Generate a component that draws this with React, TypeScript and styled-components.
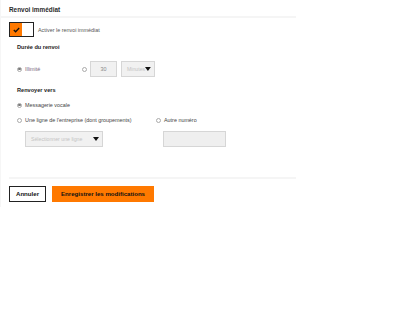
import React from "react";
import styled, { createGlobalStyle } from "styled-components";

const GlobalStyle = createGlobalStyle`
  body {
    margin: 0;
    background: #ffffff;
    font-family: "Liberation Sans", Arial, sans-serif;
    color: #333;
  }
`;

const Caret: React.FC = () => (
  <svg width="6" height="4" viewBox="0 0 6 4">
    <polygon points="0,0 6,0 3,4" fill="#111" />
  </svg>
);

const App: React.FC = () => {
  return (
    <>
      <GlobalStyle />
      <Panel>
        <Header>Renvoi immédiat</Header>
        <Rule />
        <Body>
          <ToggleRow>
            <Toggle>
              <ToggleOn>
                <svg width="7" height="6" viewBox="0 0 7 6">
                  <polyline points="0.8,3 2.6,4.8 6.2,1" fill="none" stroke="#111" strokeWidth="1.3" />
                </svg>
              </ToggleOn>
            </Toggle>
            <Label>Activer le renvoi immédiat</Label>
          </ToggleRow>

          <Section>
            <SectionTitle $top={6}>Durée du renvoi</SectionTitle>
            <FieldRow $top={10}>
              <Option $width={65}>
                <Radio $checked />
                <OptionText $muted>Illimité</OptionText>
              </Option>
              <Radio />
              <NumberBox $ml={3}>30</NumberBox>
              <SelectBox $width={34} $ml={4}>
                <Placeholder>Minutes</Placeholder>
                <Caret />
              </SelectBox>
            </FieldRow>

            <SectionTitle $top={9}>Renvoyer vers</SectionTitle>
            <Option $top={7}>
              <Radio $checked />
              <OptionText>Messagerie vocale</OptionText>
            </Option>
            <Columns>
              <Column $width={139}>
                <Option>
                  <Radio />
                  <OptionText>Une ligne de l'entreprise (dont groupements)</OptionText>
                </Option>
                <SelectBox $width={78} $ml={8} $top={7}>
                  <Placeholder>Sélectionner une ligne</Placeholder>
                  <Caret />
                </SelectBox>
              </Column>
              <Column>
                <Option>
                  <Radio />
                  <OptionText>Autre numéro</OptionText>
                </Option>
                <TextBox />
              </Column>
            </Columns>
          </Section>

          <Rule $top={30} />
          <Footer>
            <Button>Annuler</Button>
            <Button $primary>Enregistrer les modifications</Button>
          </Footer>
        </Body>
      </Panel>
    </>
  );
};

const Panel = styled.div`
  width: 295px;
  padding-bottom: 5px;
  border-left: 1px solid #f6f6f6;
`;

const Header = styled.div`
  padding: 6px 0 2px 8px;
  font-size: 6.4px;
  font-weight: bold;
  line-height: 8px;
  color: #2a2a2a;
`;

const Rule = styled.div<{ $top?: number }>`
  height: 2px;
  margin-top: ${(p) => p.$top ?? 0}px;
  background: #f5f5f5;
`;

const Body = styled.div`
  padding-left: 8px;
`;

const ToggleRow = styled.div`
  display: flex;
  align-items: center;
  gap: 4px;
  margin-top: 4px;
  height: 15px;
`;

const Toggle = styled.div`
  display: flex;
  width: 25px;
  height: 15px;
  box-sizing: border-box;
  border: 1px solid #222;
  background: #fff;
`;

const ToggleOn = styled.div`
  display: flex;
  align-items: center;
  justify-content: center;
  width: 12px;
  height: 100%;
  background: #ff7900;
`;

const Label = styled.span`
  font-size: 5.4px;
  color: #555;
`;

const Section = styled.div`
  padding-left: 8px;
`;

const SectionTitle = styled.div<{ $top: number }>`
  margin-top: ${(p) => p.$top}px;
  font-size: 5.6px;
  font-weight: bold;
  line-height: 8px;
  color: #222;
`;

const FieldRow = styled.div<{ $top: number }>`
  display: flex;
  align-items: center;
  margin-top: ${(p) => p.$top}px;
  height: 16px;
`;

const Option = styled.div<{ $width?: number; $top?: number }>`
  display: flex;
  align-items: center;
  gap: 3px;
  height: 8px;
  width: ${(p) => (p.$width ? `${p.$width}px` : "auto")};
  margin-top: ${(p) => p.$top ?? 0}px;
`;

const Radio = styled.span<{ $checked?: boolean }>`
  display: inline-flex;
  align-items: center;
  justify-content: center;
  width: 5px;
  height: 5px;
  box-sizing: border-box;
  border: 0.7px solid #aaa;
  border-radius: 50%;
  background: #fff;
  flex-shrink: 0;

  &::after {
    content: "";
    display: ${(p) => (p.$checked ? "block" : "none")};
    width: 2.4px;
    height: 2.4px;
    border-radius: 50%;
    background: #777;
  }
`;

const OptionText = styled.span<{ $muted?: boolean }>`
  font-size: 5.4px;
  color: ${(p) => (p.$muted ? "#7a6a80" : "#444")};
  white-space: nowrap;
`;

const NumberBox = styled.div<{ $ml: number }>`
  display: flex;
  align-items: center;
  justify-content: center;
  margin-left: ${(p) => p.$ml}px;
  width: 27px;
  height: 16px;
  box-sizing: border-box;
  border: 1px solid #d6d6d6;
  background: #f1f1f1;
  font-size: 5.4px;
  color: #888;
`;

const SelectBox = styled.div<{ $width: number; $ml: number; $top?: number }>`
  display: flex;
  align-items: center;
  justify-content: space-between;
  margin-left: ${(p) => p.$ml}px;
  margin-top: ${(p) => p.$top ?? 0}px;
  width: ${(p) => p.$width}px;
  height: 16px;
  padding: 0 3px 0 5px;
  box-sizing: border-box;
  border: 1px solid #d6d6d6;
  background: #f1f1f1;
`;

const Placeholder = styled.span`
  font-size: 5.2px;
  color: #c4c4c4;
  white-space: nowrap;
`;

const Columns = styled.div`
  display: flex;
  margin-top: 7px;
`;

const Column = styled.div<{ $width?: number }>`
  display: flex;
  flex-direction: column;
  width: ${(p) => (p.$width ? `${p.$width}px` : "auto")};
`;

const TextBox = styled.div`
  margin: 7px 0 0 7px;
  width: 63px;
  height: 16px;
  box-sizing: border-box;
  border: 1px solid #d6d6d6;
  background: #efefef;
`;

const Footer = styled.div`
  display: flex;
  gap: 6px;
  padding-top: 7px;
`;

const Button = styled.button<{ $primary?: boolean }>`
  height: 16px;
  padding: 0 ${(p) => (p.$primary ? 8 : 6)}px;
  box-sizing: border-box;
  border: ${(p) => (p.$primary ? "1px solid #ff7900" : "1.5px solid #222")};
  background: ${(p) => (p.$primary ? "#ff7900" : "#fff")};
  font-family: "Liberation Sans", Arial, sans-serif;
  font-size: 6.1px;
  font-weight: bold;
  color: #111;
  line-height: 1;
`;

export default App;
